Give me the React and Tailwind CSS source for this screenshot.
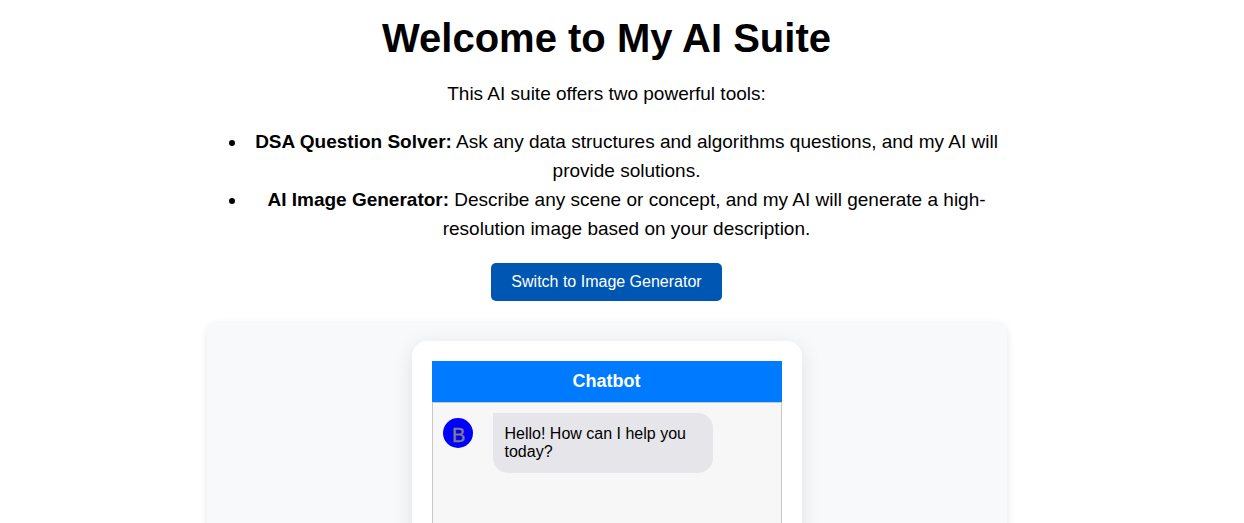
const tools = [
  {
    name: "DSA Question Solver:",
    text: "Ask any data structures and algorithms questions, and my AI will provide solutions.",
  },
  {
    name: "AI Image Generator:",
    text: "Describe any scene or concept, and my AI will generate a high-resolution image based on your description.",
  },
];

function BotAvatar() {
  return (
    <svg viewBox="0 0 30 30" className="mt-[5px] size-[30px] shrink-0" role="img" aria-label="Bot">
      <circle cx="15" cy="15" r="15" fill="#0000ff" />
      <text x="9" y="24" fontSize="20" fill="#808080" stroke="#808080" strokeWidth="0.4">
        B
      </text>
    </svg>
  );
}

function Chatbot() {
  return (
    <section className="mx-auto w-full max-w-[390px] rounded-[15px] bg-white p-5 shadow-[0_4px_20px_rgba(0,0,0,0.1)]">
      <h2 className="bg-[#007bff] py-2.5 text-center text-lg leading-[21px] font-bold text-white">
        Chatbot
      </h2>
      <div className="flex min-h-[400px] items-start gap-5 border border-[#c8c8c8] bg-[#f7f7f7] p-2.5">
        <BotAvatar />
        <p className="max-w-[220px] rounded-[15px] rounded-tl-none bg-[#e5e5ea] p-3 text-left text-base leading-[18px]">
          Hello! How can I help you today?
        </p>
      </div>
    </section>
  );
}

export default function App() {
  return (
    <main className="bg-white pr-[31px] pb-5 font-['Liberation_Sans',Arial,sans-serif] text-black">
      <div className="mx-auto max-w-[800px] pt-2 text-center text-[19px] leading-[29px]">
        <h1 className="text-[40px] leading-[60px] font-bold">Welcome to My AI Suite</h1>
        <p className="mt-[11px]">This AI suite offers two powerful tools:</p>
        <ul className="mt-[19px] list-disc pl-10">
          {tools.map((tool) => (
            <li key={tool.name}>
              <strong className="font-bold">{tool.name}</strong> {tool.text}
            </li>
          ))}
        </ul>
        <button
          type="button"
          className="mx-auto mt-5 block rounded-[5px] bg-[#0056b3] px-5 py-2.5 text-base leading-[18px] text-white"
        >
          Switch to Image Generator
        </button>
        <div className="mt-5 rounded-[10px] bg-[#f8f9fb] p-5 shadow-[0_4px_8px_rgba(0,0,0,0.1)]">
          <Chatbot />
        </div>
      </div>
    </main>
  );
}
